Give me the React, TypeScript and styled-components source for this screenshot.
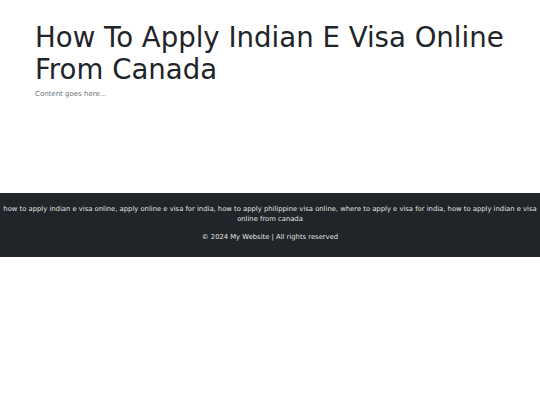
import React from 'react';
import styled, { createGlobalStyle } from 'styled-components';

const GlobalStyle = createGlobalStyle`
    html, body {
        margin: 0;
        padding: 0;
        background: #ffffff;
        font-family: 'DejaVu Sans', sans-serif;
        color: #212529;
    }
`;

const Main = styled.main`
    padding: 22px 35px 0;
    height: 175px;
    box-sizing: border-box;
`;

const Title = styled.h1`
    margin: 0 0 4px;
    font-size: 27.6px;
    font-weight: 400;
    line-height: 32px;
    color: #212529;
`;

const Body = styled.p`
    margin: 0;
    font-size: 7px;
    color: #6c757d;
`;

const Footer = styled.footer`
    background: #212529;
    color: #e0e0e0;
    text-align: center;
    padding: 11px 1px 15px;
    font-size: 6.8px;
    line-height: 10px;
    margin-top: 18px;
`;

const Keywords = styled.p`
    margin: 0 0 8px;
`;

const Copy = styled.p`
    margin: 0;
`;

export default function App(): JSX.Element {
    return (
        <>
            <GlobalStyle />
            <Main>
                <Title>How To Apply Indian E Visa Online From Canada</Title>
                <Body>Content goes here...</Body>
            </Main>
            <Footer>
                <Keywords>
                    how to apply indian e visa online, apply online e visa for india, how to apply philippine visa
                    online, where to apply e visa for india, how to apply indian e visa online from canada
                </Keywords>
                <Copy>© 2024 My Website | All rights reserved</Copy>
            </Footer>
        </>
    );
}
